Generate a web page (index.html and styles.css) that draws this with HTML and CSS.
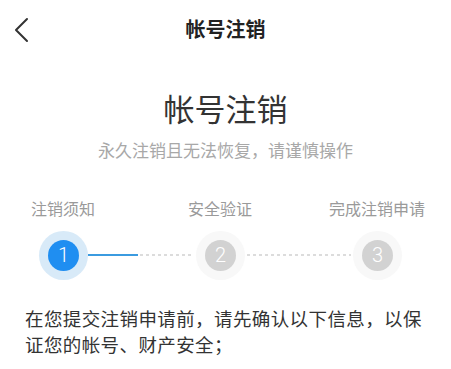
FILE: index.html
```html
<!DOCTYPE html>
<html lang="zh-CN">
<head>
<meta charset="utf-8">
<title>帐号注销</title>
<link rel="stylesheet" href="styles.css">
</head>
<body>
<div class="page">
  <header class="topbar">
    <div class="back">
      <svg width="16" height="26" viewBox="0 0 16 26"><polyline points="13,2 2,13 13,24" fill="none" stroke="#333" stroke-width="2" stroke-linecap="round" stroke-linejoin="round"/></svg>
    </div>
    <h1 class="topbar-title">帐号注销</h1>
    <div></div>
  </header>

  <h2 class="hero-title">帐号注销</h2>
  <p class="hero-sub">永久注销且无法恢复，请谨慎操作</p>

  <div class="step-labels">
    <span class="step-label">注销须知</span>
    <span class="step-label">安全验证</span>
    <span class="step-label">完成注销申请</span>
  </div>

  <div class="steps">
    <div class="halo halo-active"><div class="dot dot-active">1</div></div>
    <div class="connector">
      <div class="line-active"></div>
      <div class="line-dashed"></div>
    </div>
    <div class="halo"><div class="dot">2</div></div>
    <div class="connector">
      <div class="line-dashed"></div>
    </div>
    <div class="halo"><div class="dot">3</div></div>
  </div>

  <p class="notice">在您提交注销申请前，请先确认以下信息，以保证您的帐号、财产安全；</p>
</div>
</body>
</html>
```

FILE: styles.css
```css
* { box-sizing: border-box; }
html, body {
  margin: 0;
  padding: 0;
  background: #fff;
}
body {
  font-family: "Noto Sans CJK SC", "Noto Sans", sans-serif;
  color: #333;
}
.page {
  width: 451px;
  height: 369px;
  overflow: hidden;
}
.topbar {
  height: 57px;
  display: grid;
  grid-template-columns: 1fr auto 1fr;
  align-items: center;
}
.back {
  padding-left: 14px;
  padding-top: 2px;
  display: flex;
  align-items: center;
}
.topbar-title {
  margin: 0;
  font-size: 20px;
  font-weight: 700;
  line-height: 57px;
  color: #222;
}
.hero-title {
  margin: 31px 0 0;
  text-align: center;
  font-size: 31px;
  font-weight: 400;
  line-height: 40px;
  color: #333;
}
.hero-sub {
  margin: 10px 0 0;
  text-align: center;
  font-size: 17px;
  line-height: 24px;
  color: #a8a8a8;
}
.step-labels {
  margin-top: 35px;
  display: grid;
  grid-template-columns: repeat(3, 126px);
  column-gap: 31px;
}
.step-label {
  text-align: center;
  font-size: 16px;
  line-height: 22px;
  color: #9a9a9a;
  white-space: nowrap;
}
.steps {
  margin-top: 11px;
  height: 50px;
  display: flex;
  align-items: center;
  padding-left: 39px;
}
.halo {
  flex: none;
  width: 49px;
  height: 49px;
  border-radius: 50%;
  background: #f8f8f8;
  display: flex;
  align-items: center;
  justify-content: center;
}
.halo-active {
  background: #d8eaf8;
}
.dot {
  width: 31px;
  height: 31px;
  border-radius: 50%;
  background: #d2d2d2;
  color: #fff;
  font-family: Roboto, "Liberation Sans", sans-serif;
  font-weight: 300;
  font-size: 20px;
  line-height: 31px;
  text-align: center;
}
.dot-active {
  background: #1f8ef1;
}
.connector {
  flex: none;
  width: 108px;
  display: flex;
  align-items: center;
  padding: 0 2px 0 0;
}
.line-active {
  flex: none;
  width: 50px;
  height: 2px;
  background: #3b9be0;
}
.line-dashed {
  flex: 1;
  height: 2px;
  margin-left: 2px;
  background: repeating-linear-gradient(to right, #dcdcdc 0 3px, transparent 3px 6px);
}
.notice {
  margin: 25px 0 0;
  padding: 0 22px 0 25px;
  font-size: 18.5px;
  letter-spacing: 0.4px;
  line-height: 26px;
  color: #333;
}
```
